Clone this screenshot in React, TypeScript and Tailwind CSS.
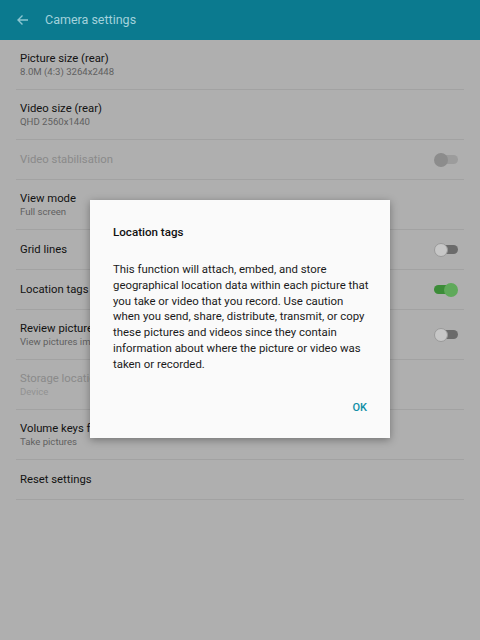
import React from 'react';

type Row = {
  title: string;
  sub?: string;
  disabled?: boolean;
  toggle?: 'off' | 'on' | 'disabled';
};

const rows: Row[] = [
  { title: 'Picture size (rear)', sub: '8.0M (4:3) 3264x2448' },
  { title: 'Video size (rear)', sub: 'QHD 2560x1440' },
  { title: 'Video stabilisation', disabled: true, toggle: 'disabled' },
  { title: 'View mode', sub: 'Full screen' },
  { title: 'Grid lines', toggle: 'off' },
  { title: 'Location tags', toggle: 'on' },
  { title: 'Review pictures', sub: 'View pictures immediately', toggle: 'off' },
  { title: 'Storage location', sub: 'Device', disabled: true },
  { title: 'Volume keys function', sub: 'Take pictures' },
  { title: 'Reset settings' },
];

const Toggle = ({ state }: { state: 'off' | 'on' | 'disabled' }) => {
  if (state === 'on') {
    return (
      <div className="relative w-[24px] h-[14px] flex items-center">
        <div className="w-[22px] h-[9px] rounded-full bg-[#3c8c38]" />
        <div className="absolute right-0 top-0 w-[14px] h-[14px] rounded-full bg-[#5fa95a]" />
      </div>
    );
  }
  if (state === 'disabled') {
    return (
      <div className="relative w-[24px] h-[14px] flex items-center justify-end">
        <div className="w-[22px] h-[9px] rounded-full bg-[#9c9c9c]" />
        <div className="absolute left-0 top-0 w-[14px] h-[14px] rounded-full bg-[#8c8c8c]" />
      </div>
    );
  }
  return (
    <div className="relative w-[24px] h-[14px] flex items-center justify-end">
      <div className="w-[22px] h-[9px] rounded-full bg-[#6b6b6b]" />
      <div className="absolute left-0 top-0 w-[14px] h-[14px] rounded-full bg-[#c7c7c7] border border-[#9a9a9a]" />
    </div>
  );
};

export default function App() {
  return (
    <div
      className="relative w-[480px] h-[640px] bg-[#afafaf] overflow-hidden"
      style={{ fontFamily: 'Roboto, "Noto Sans", sans-serif' }}
    >
      <div className="h-[40px] bg-[#0b7a8f] flex items-center pl-[16px]">
        <svg width="13" height="12" viewBox="0 0 13 12" className="mr-[16px]">
          <path d="M12 6H2M6.5 1.5L2 6l4.5 4.5" stroke="#8cc6d1" strokeWidth="1.4" fill="none" />
        </svg>
        <span className="text-[12.5px] text-[#a3d2dc]">Camera settings</span>
      </div>

      <div className="px-[16px]">
        {rows.map((r) => (
          <div
            key={r.title}
            className={`${r.sub ? 'h-[50px]' : 'h-[40px]'} border-b border-[#a2a2a2] flex items-center justify-between pl-[4px] pr-[6px]`}
          >
            <div className="flex flex-col whitespace-nowrap">
              <span className={`text-[11.3px] leading-[14px] ${r.disabled ? 'text-[#8a8a8a]' : 'text-[#121212]'}`}>
                {r.title}
              </span>
              {r.sub && (
                <span className={`text-[9.6px] leading-[12px] ${r.disabled ? 'text-[#929292]' : 'text-[#5f5f5f]'}`}>
                  {r.sub}
                </span>
              )}
            </div>
            {r.toggle && <Toggle state={r.toggle} />}
          </div>
        ))}
      </div>

      <div className="absolute left-[90px] top-[200px] w-[300px] h-[238px] bg-[#fafafa] shadow-[0_2px_8px_rgba(0,0,0,0.35)] px-[23px] pt-[24px] flex flex-col">
        <div className="text-[11.6px] font-medium text-[#111] leading-[16px]">Location tags</div>
        <p className="mt-[22px] w-[256px] text-[11.4px] leading-[15.8px] text-[#1a1a1a]">
          This function will attach, embed, and store geographical location data within each picture that you take or video that you record. Use caution when you send, share, distribute, transmit, or copy these pictures and videos since they contain information about where the picture or video was taken or recorded.
        </p>
        <div className="flex justify-end mt-auto mb-[22px]">
          <span className="text-[11px] font-medium text-[#0f8ea6]">OK</span>
        </div>
      </div>
    </div>
  );
}
